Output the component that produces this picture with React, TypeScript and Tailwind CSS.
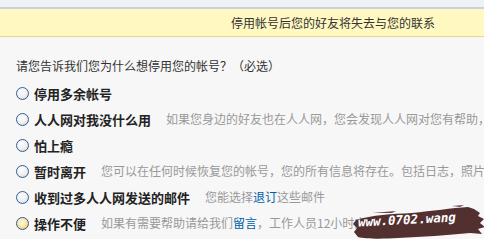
import React from 'react'

type Reason = {
  label: string
  desc?: React.ReactNode
  active?: boolean
}

const reasons: Reason[] = [
  { label: '停用多余帐号' },
  { label: '人人网对我没什么用', desc: '如果您身边的好友也在人人网，您会发现人人网对您有帮助，' },
  { label: '怕上瘾' },
  { label: '暂时离开', desc: '您可以在任何时候恢复您的帐号，您的所有信息将存在。包括日志，照片' },
  {
    label: '收到过多人人网发送的邮件',
    desc: (
      <>
        您能选择<span className="text-[#005eac]">退订</span>这些邮件
      </>
    ),
  },
  {
    label: '操作不便',
    desc: (
      <>
        如果有需要帮助请给我们<span className="text-[#005eac]">留言</span>，工作人员12小时内
      </>
    ),
    active: true,
  },
]

function Radio({ active }: { active?: boolean }) {
  return (
    <span
      className={
        active
          ? 'h-[13px] w-[13px] shrink-0 rounded-full border border-[#2f6099] bg-[radial-gradient(circle_at_45%_40%,#fffbe8_0%,#fbe29a_55%,#e9b53c_100%)]'
          : 'h-[13px] w-[13px] shrink-0 rounded-full border border-[#2f6099] bg-[radial-gradient(circle_at_40%_35%,#ffffff_0%,#eeeeee_55%,#c4c4c4_100%)]'
      }
    />
  )
}

function Watermark() {
  return (
    <div className="absolute left-[352px] top-[205px] h-[35px] w-[134px]">
      <svg width="134" height="35" viewBox="0 0 134 35" className="absolute inset-0">
        <path
          d="M4 15 C20 10 40 9 60 8 C80 6 100 3 116 2 L122 4 L128 8 L126 11 L132 14 L128 18 L133 22 L126 24 L130 29 L118 28 C96 30 70 32 46 33 C30 34 14 34 6 32 L2 27 L5 23 L1 19 Z"
          fill="#523030"
        />
        <path d="M20 8 L44 6 L40 8 Z M100 1 L112 0 L108 2 Z" fill="#6b4545" />
      </svg>
      <span className="absolute left-[6px] top-[9px] -rotate-[3deg] whitespace-nowrap font-['DejaVu_Sans_Mono',monospace] text-[12.5px] font-bold italic leading-none text-white">
        www.0702.wang
      </span>
    </div>
  )
}

export default function App() {
  return (
    <div className="relative h-[239px] w-[484px] overflow-hidden bg-[#f7f7f7] font-['Noto_Sans_CJK_SC','Liberation_Sans',sans-serif] text-[#333]">
      <div className="h-[7px] bg-[#eef2f7]" />
      <div className="h-[2px] bg-[#c8d1e0]" />
      <div className="flex h-[28px] items-center whitespace-nowrap border-b border-[#e6d68f] bg-[#fff8c0] pl-[231px] text-[12px]">
        停用帐号后您的好友将失去与您的联系
      </div>

      <div className="px-[16px] pt-[21px]">
        <p className="whitespace-nowrap text-[12px] leading-[16px]">请您告诉我们您为什么想停用您的帐号？（必选）</p>
        <ul className="mt-[6px] flex flex-col">
          {reasons.map(r => (
            <li key={r.label} className="flex h-[26px] items-center whitespace-nowrap">
              <Radio active={r.active} />
              <span className="ml-[5px] text-[13px] font-bold leading-none text-[#222]">{r.label}</span>
              {r.desc && <span className="ml-[15px] text-[12px] leading-none text-[#999]">{r.desc}</span>}
            </li>
          ))}
        </ul>
      </div>

      <Watermark />
    </div>
  )
}
